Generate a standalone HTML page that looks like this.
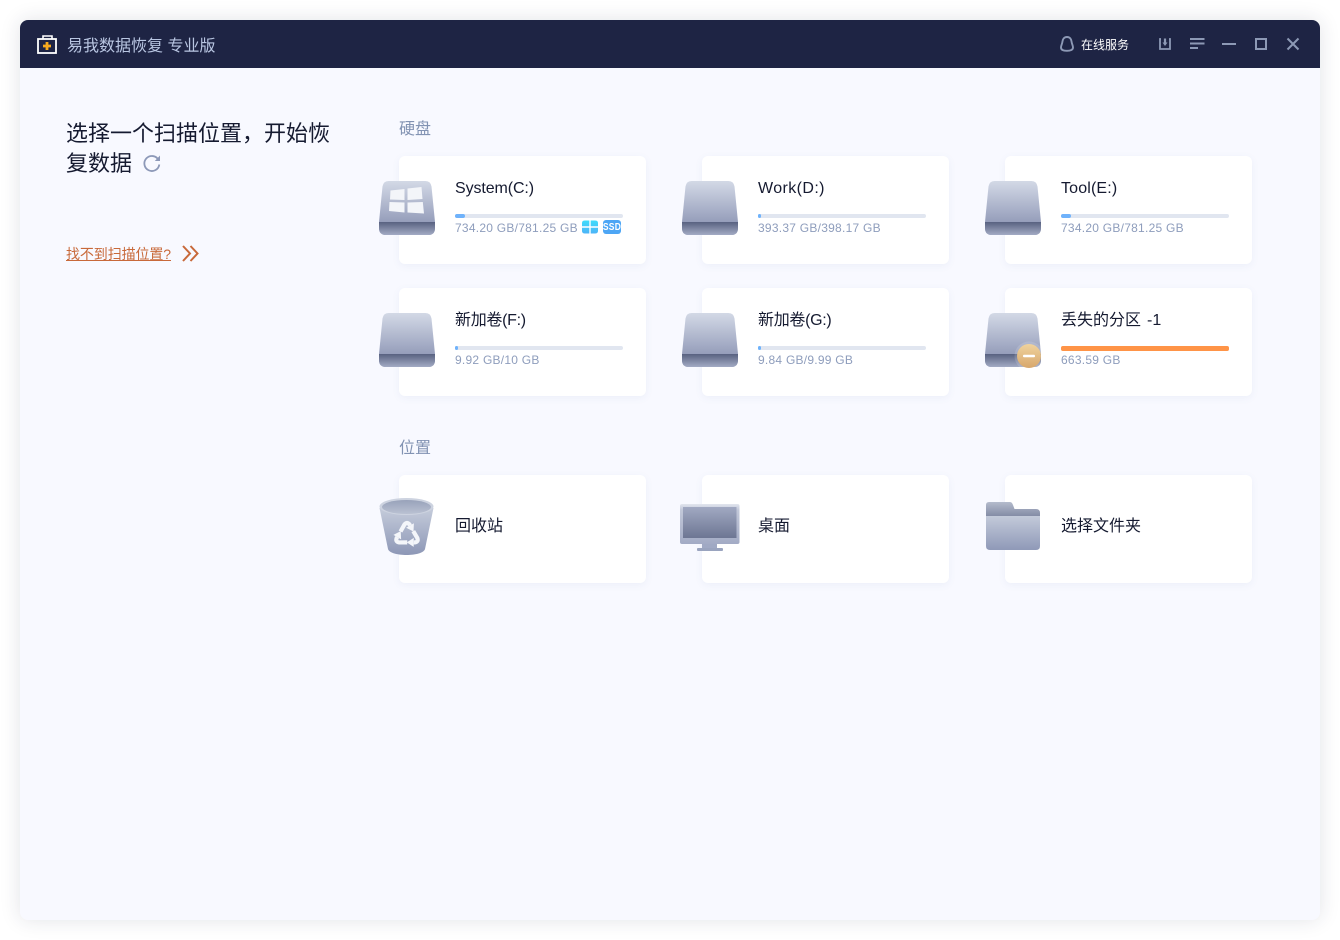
<!DOCTYPE html>
<html lang="zh-CN"><head><meta charset="utf-8"><title>易我数据恢复 专业版</title>
<style>
*{box-sizing:border-box;margin:0;padding:0}
html,body{width:1340px;height:940px;overflow:hidden;background:#fff}
body{font-family:"Liberation Sans","Noto Sans CJK SC",sans-serif;position:relative}
.win{position:absolute;left:20px;top:20px;width:1300px;height:900px;background:#f8f9ff;border-radius:8px;box-shadow:0 0 20px rgba(30,35,70,.13)}
.bar{position:absolute;left:20px;top:20px;width:1300px;height:48px;background:#1e2444;border-radius:8px 8px 0 0}
.a{position:absolute;white-space:nowrap}
.card{position:absolute;width:247px;height:108px;background:#fff;border-radius:6px;box-shadow:0 2px 8px rgba(90,110,170,.07)}
.name{position:absolute;font-size:16px;line-height:22px;color:#151a30;white-space:nowrap}
.track{position:absolute;width:168px;height:4px;background:#e1e6f0;border-radius:2px}
.fill{position:absolute;left:0;top:0;height:4px;background:#6fb2fb;border-radius:2px}
.size{position:absolute;font-size:12px;line-height:16px;color:#8e9dbc;white-space:nowrap;letter-spacing:.25px}
.sec{position:absolute;font-size:16px;line-height:20px;color:#8293b3}
svg{position:absolute;overflow:visible}
</style></head><body>
<div class="win"></div>
<div class="bar"></div>

<svg style="left:0;top:0;width:0;height:0">
<defs>
<linearGradient id="dt" x1="0" y1="0" x2="0" y2="1"><stop offset="0" stop-color="#d3d9e6"/><stop offset="1" stop-color="#828bad"/></linearGradient>
<linearGradient id="db" x1="0" y1="0" x2="0" y2="1"><stop offset="0" stop-color="#586180"/><stop offset="1" stop-color="#a3abc4"/></linearGradient>
<linearGradient id="org" x1="0" y1="0" x2="0" y2="1"><stop offset="0" stop-color="#f0d39d"/><stop offset="1" stop-color="#d8a76c"/></linearGradient>
<linearGradient id="bin" x1="0" y1="0" x2="0" y2="1"><stop offset="0" stop-color="#c5ccdb"/><stop offset="1" stop-color="#8d97b6"/></linearGradient>
<linearGradient id="bin2" x1="0" y1="0" x2="0" y2="1"><stop offset="0" stop-color="#98a2ba"/><stop offset="1" stop-color="#bac1d2"/></linearGradient>
<linearGradient id="scr" x1="0" y1="0" x2="0" y2="1"><stop offset="0" stop-color="#a1a9c2"/><stop offset="1" stop-color="#6d7693"/></linearGradient>
<linearGradient id="frm" x1="0" y1="0" x2="0" y2="1"><stop offset="0" stop-color="#e2e6ee"/><stop offset=".15" stop-color="#c2c8d9"/><stop offset="1" stop-color="#a3abc5"/></linearGradient>
<linearGradient id="fld" x1="0" y1="0" x2="0" y2="1"><stop offset="0" stop-color="#c3cada"/><stop offset="1" stop-color="#8f99b8"/></linearGradient>
<linearGradient id="fld2" x1="0" y1="0" x2="0" y2="1"><stop offset="0" stop-color="#b4bbcc"/><stop offset="1" stop-color="#6f7895"/></linearGradient>
<linearGradient id="wb" x1="0" y1="0" x2="0" y2="1"><stop offset="0" stop-color="#3fdcfb"/><stop offset="1" stop-color="#4db4f8"/></linearGradient>
<g id="drive">
<path d="M9.500 0H46.500Q51.500 0 52.500 5.500L56 41V47Q56 54 49 54H7Q0 54 0 47V41L3.500 5.500Q4.500 0 9.500 0Z" fill="url(#dt)"/>
<path d="M0 41H56V47Q56 54 49 54H7Q0 54 0 47Z" fill="url(#db)"/>
</g>
<g id="rc">
<path d="M-6.500 -3.500L-2.500 -10.500Q0 -13.500 2.500 -10.500L3 -9.500" fill="none" stroke="#f4f6fa" stroke-width="4.200"/>
<path d="M6.900 -11.700L-.9 -7.300L6.500 -3.500Z" fill="#f4f6fa"/>
</g>
</defs></svg>

<!-- title bar -->
<svg style="left:37px;top:35px;width:20px;height:20px" viewBox="0 0 20 20">
<rect x="1" y="4" width="18" height="14" fill="#1e2444" stroke="#fff" stroke-width="1.800"/>
<path d="M6 4V1H15V4" fill="none" stroke="#fff" stroke-width="1.600"/>
<path d="M10 7V15M6 11H14" stroke="#f7a91e" stroke-width="2.800" fill="none"/>
</svg>
<div class="a" style="left:67px;top:36px;font-size:16px;line-height:22px;color:#b9c6e2">易我数据恢复 专业版</div>

<svg style="left:1060px;top:36px;width:14px;height:16px" viewBox="0 0 14 16">
<path d="M7 1C3.800 1 2.600 3.500 2.400 5.800C2.200 8 1 9.500 1 11.500C1 13.800 3.500 14.800 7 14.800C10.500 14.800 13 13.800 13 11.500C13 9.500 11.800 8 11.600 5.800C11.400 3.500 10.200 1 7 1Z" fill="none" stroke="#8d99b5" stroke-width="1.900"/>
</svg>
<div class="a" style="left:1081px;top:37px;font-size:12px;line-height:17px;color:#fff">在线服务</div>
<svg style="left:1159px;top:38px;width:12px;height:12px" viewBox="0 0 12 12">
<path d="M2 1H1V11H11V1H10" fill="none" stroke="#8d99b5" stroke-width="1.800"/>
<path d="M6 .5V6" stroke="#8d99b5" stroke-width="2.200"/><path d="M3.500 4.500H8.500L6 8Z" fill="#8d99b5"/>
</svg>
<svg style="left:1190px;top:38px;width:15px;height:11px" viewBox="0 0 15 11">
<path d="M0 1H14.500M0 5.500H14.500M0 10H8" stroke="#8d99b5" stroke-width="2" fill="none"/>
</svg>
<svg style="left:1222px;top:43px;width:14px;height:2px"><rect width="14" height="2" fill="#8d99b5"/></svg>
<svg style="left:1255px;top:38px;width:12px;height:12px" viewBox="0 0 12 12"><rect x="1" y="1" width="10" height="10" fill="none" stroke="#8d99b5" stroke-width="2"/></svg>
<svg style="left:1287px;top:38px;width:12px;height:12px" viewBox="0 0 12 12"><path d="M.5 .5L11.500 11.500M11.500 .5L.5 11.500" stroke="#8d99b5" stroke-width="2" fill="none"/></svg>

<!-- left column -->
<div class="a" style="left:66px;top:119px;width:270px;white-space:normal;font-size:22px;line-height:30px;color:#151a30">选择一个扫描位置，开始恢复数据</div>
<svg style="left:143px;top:154px;width:18px;height:18px" viewBox="0 0 18 18">
<path d="M15.500 6A7.500 7.500 0 1 0 16.300 10.500" fill="none" stroke="#8d99b8" stroke-width="1.800"/>
<path d="M17 1.500V7H11.800Z" fill="#8d99b8"/>
</svg>
<div class="a" style="left:66px;top:245px;font-size:14px;line-height:18px;letter-spacing:-.1px;color:#c8693a;text-decoration:underline">找不到扫描位置?</div>
<svg style="left:182px;top:245px;width:17px;height:17px" viewBox="0 0 17 17">
<path d="M1 1L8 8.500L1 16M8.500 1L15.500 8.500L8.500 16" fill="none" stroke="#c8693a" stroke-width="2"/>
</svg>

<!-- section labels -->
<div class="sec" style="left:399px;top:120px">硬盘</div>
<div class="sec" style="left:399px;top:439px">位置</div>

<!-- cards -->
<div class="card" style="left:399px;top:156px"></div>
<div class="card" style="left:702px;top:156px"></div>
<div class="card" style="left:1005px;top:156px"></div>
<div class="card" style="left:399px;top:288px"></div>
<div class="card" style="left:702px;top:288px"></div>
<div class="card" style="left:1005px;top:288px"></div>
<div class="card" style="left:399px;top:475px"></div>
<div class="card" style="left:702px;top:475px"></div>
<div class="card" style="left:1005px;top:475px"></div>

<!-- drive icons -->
<svg style="left:379px;top:181px;width:56px;height:54px" viewBox="0 0 56 54"><use href="#drive"/>
<path d="M11.500 9.500L25.500 8V19L11 18.500ZM28.500 7.500L42.500 6L43.500 18L28.500 19ZM10.500 21L25.500 21.500V31.500L10 30ZM28.500 21.500L43.800 21L45 32.500L28.500 31.500Z" fill="#f3f5f9"/>
</svg>
<svg style="left:682px;top:181px;width:56px;height:54px" viewBox="0 0 56 54"><use href="#drive"/></svg>
<svg style="left:985px;top:181px;width:56px;height:54px" viewBox="0 0 56 54"><use href="#drive"/></svg>
<svg style="left:379px;top:313px;width:56px;height:54px" viewBox="0 0 56 54"><use href="#drive"/></svg>
<svg style="left:682px;top:313px;width:56px;height:54px" viewBox="0 0 56 54"><use href="#drive"/></svg>
<svg style="left:985px;top:313px;width:56px;height:54px" viewBox="0 0 56 54"><use href="#drive"/>
<circle cx="44" cy="43" r="14.500" fill="#fff" opacity=".14"/>
<circle cx="44" cy="43" r="12" fill="url(#org)"/>
<rect x="38" y="41.800" width="12" height="2.400" rx="1" fill="#fff"/>
</svg>

<!-- drive text -->
<div class="name" style="left:455px;top:178px;letter-spacing:-.1px">System(C:)</div>
<div class="track" style="left:455px;top:214px"><div class="fill" style="width:10px"></div></div>
<div class="size" style="left:455px;top:220px">734.20 GB/781.25 GB</div>
<svg style="left:582px;top:220px;width:16px;height:14px" viewBox="0 0 16 14">
<path d="M0 3Q0 .5 3 .5H7.300V6.300H0ZM8.700 .5H13Q16 .5 16 3V6.300H8.700ZM0 7.700H7.300V13.500H3Q0 13.500 0 11ZM8.700 7.700H16V11Q16 13.500 13 13.500H8.700Z" fill="url(#wb)"/>
</svg>
<div class="a" style="left:603px;top:220px;width:18px;height:14px;background:#4da6f5;border-radius:3px;overflow:hidden"><span style="display:block;color:#fff;font-size:10px;font-weight:bold;line-height:15px;text-align:center;transform:scaleX(.85);letter-spacing:.3px;margin-left:-2px;width:22px">SSD</span></div>

<div class="name" style="left:758px;top:178px;letter-spacing:.4px">Work(D:)</div>
<div class="track" style="left:758px;top:214px"><div class="fill" style="width:3px"></div></div>
<div class="size" style="left:758px;top:220px">393.37 GB/398.17 GB</div>

<div class="name" style="left:1061px;top:178px;letter-spacing:.15px">Tool(E:)</div>
<div class="track" style="left:1061px;top:214px"><div class="fill" style="width:10px"></div></div>
<div class="size" style="left:1061px;top:220px">734.20 GB/781.25 GB</div>

<div class="name" style="left:455px;top:310px;letter-spacing:-.3px">新加卷(F:)</div>
<div class="track" style="left:455px;top:346px"><div class="fill" style="width:3px"></div></div>
<div class="size" style="left:455px;top:352px">9.92 GB/10 GB</div>

<div class="name" style="left:758px;top:310px;letter-spacing:-.3px">新加卷(G:)</div>
<div class="track" style="left:758px;top:346px"><div class="fill" style="width:3px"></div></div>
<div class="size" style="left:758px;top:352px">9.84 GB/9.99 GB</div>

<div class="name" style="left:1061px;top:310px">丢失的分区<span style="margin-left:6px">-1</span></div>
<div class="track" style="left:1061px;top:346px;height:5px"><div class="fill" style="width:168px;height:5px;background:#ff9447"></div></div>
<div class="size" style="left:1061px;top:352px">663.59 GB</div>

<!-- location icons -->
<svg style="left:379px;top:497px;width:56px;height:60px" viewBox="0 0 56 60">
<path d="M.5 11L9 52C11 60 44 60 46 52L54.500 11Z" fill="url(#bin)"/>
<ellipse cx="27.500" cy="9.500" rx="27" ry="8.500" fill="#cdd3e0"/>
<ellipse cx="27.500" cy="10" rx="24.500" ry="7" fill="url(#bin2)"/>
<g transform="translate(28 38)"><use href="#rc"/><use href="#rc" transform="rotate(120)"/><use href="#rc" transform="rotate(240)"/></g>
</svg>
<svg style="left:680px;top:504px;width:60px;height:47px" viewBox="0 0 60 47">
<rect x="0" y="0" width="59.500" height="40" rx="2" fill="url(#frm)"/>
<rect x="3" y="3" width="53.500" height="31" fill="url(#scr)"/>
<path d="M22 40H37V44H22Z" fill="#a0a9c4"/>
<rect x="17" y="44" width="26" height="3" rx="1" fill="#9aa4bf"/>
</svg>
<svg style="left:986px;top:502px;width:54px;height:48px" viewBox="0 0 54 48">
<path d="M0 3Q0 0 3 0H24Q26 0 27 3L28.500 7H50Q54 7 54 11V20H0Z" fill="url(#fld2)"/>
<path d="M0 14H54V44Q54 48 50 48H4Q0 48 0 44Z" fill="url(#fld)"/>
</svg>

<div class="name" style="left:455px;top:516px">回收站</div>
<div class="name" style="left:758px;top:516px">桌面</div>
<div class="name" style="left:1061px;top:516px">选择文件夹</div>
</body></html>
